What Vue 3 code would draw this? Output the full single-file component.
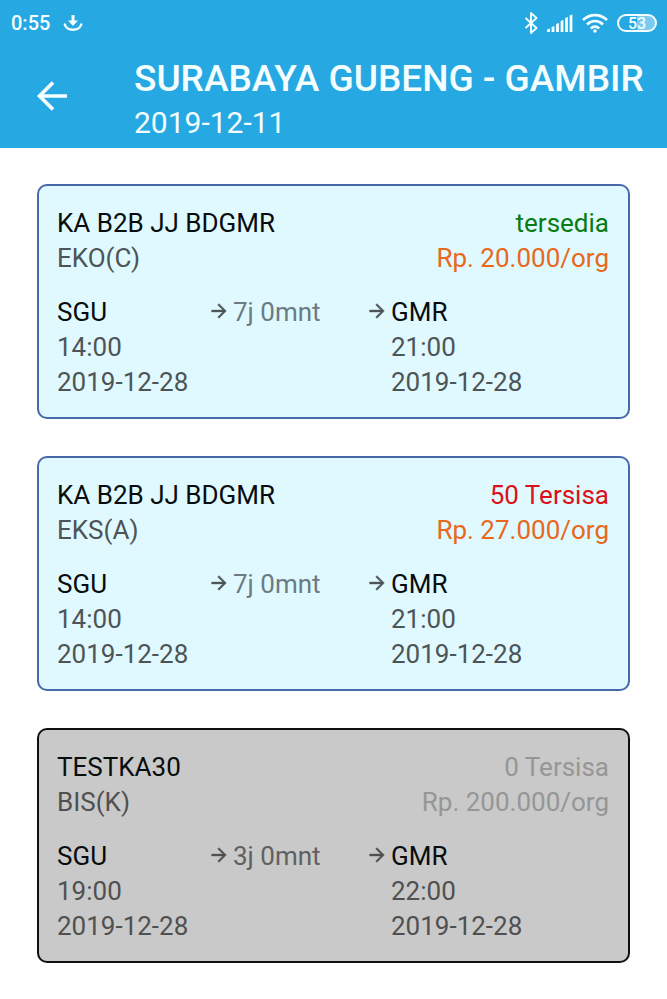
<script setup>
const trains = [
  {
    id: 1, name: 'KA B2B JJ BDGMR', seat: 'EKO(C)', stock: 'tersedia', tone: 'available', price: 'Rp. 20.000/org',
    from: 'SGU', departTime: '14:00', departDate: '2019-12-28', duration: '7j 0mnt',
    to: 'GMR', arriveTime: '21:00', arriveDate: '2019-12-28'
  },
  {
    id: 2, name: 'KA B2B JJ BDGMR', seat: 'EKS(A)', stock: '50 Tersisa', tone: 'limited', price: 'Rp. 27.000/org',
    from: 'SGU', departTime: '14:00', departDate: '2019-12-28', duration: '7j 0mnt',
    to: 'GMR', arriveTime: '21:00', arriveDate: '2019-12-28'
  },
  {
    id: 3, name: 'TESTKA30', seat: 'BIS(K)', stock: '0 Tersisa', tone: 'sold-out', price: 'Rp. 200.000/org',
    from: 'SGU', departTime: '19:00', departDate: '2019-12-28', duration: '3j 0mnt',
    to: 'GMR', arriveTime: '22:00', arriveDate: '2019-12-28'
  }
]
</script>

<template>
  <div class="screen">
    <header class="top">
      <div class="status">
        <div class="status-group">
          <span class="clock">0:55</span>
          <svg viewBox="0 0 20 18" width="20" height="18" aria-hidden="true">
            <path d="M10 1v8" stroke="currentColor" stroke-width="3" fill="none" />
            <path d="M5 6.500h10L10 12z" fill="currentColor" />
            <path d="M1.800 10.500c2 7 14.400 7 16.400 0" stroke="currentColor" stroke-width="2.400" fill="none" stroke-linecap="round" />
          </svg>
        </div>
        <div class="status-group indicators">
          <svg viewBox="0 0 14 22" width="14" height="22" aria-hidden="true">
            <path d="M1.500 6l11 10L7 21V1l5.500 5-11 10" stroke="currentColor" stroke-width="1.900" fill="none" stroke-linejoin="round" />
          </svg>
          <svg viewBox="0 0 26 19" width="26" height="19" aria-hidden="true">
            <path d="M0 18v-2.500l3-1V18zM4.600 18v-5l2.800-1V18zM9.100 18v-8l2.800-1V18zM13.600 18V7l2.800-1v12zM18.100 18V4l2.800-1v15zM22.600 18V1.500l2.800-1V18z" fill="currentColor" />
          </svg>
          <svg viewBox="0 0 26 20" width="26" height="20" aria-hidden="true">
            <path d="M1 7c7-6.500 17-6.500 24 0M5 11.500c5-4.500 11-4.500 16 0M8.800 15.500c2.600-2.300 5.800-2.300 8.400 0" stroke="currentColor" stroke-width="2.700" fill="none" />
            <circle cx="13" cy="18" r="1.800" fill="currentColor" />
          </svg>
          <span class="battery">53</span>
        </div>
      </div>
      <div class="bar">
        <button class="back" type="button" aria-label="Kembali">
          <svg viewBox="0 0 30 30" width="30" height="30" aria-hidden="true">
            <path d="M16 1.500L2.500 15L16 28.500M2 15h28" stroke="currentColor" stroke-width="3.700" fill="none" />
          </svg>
        </button>
        <div class="heading">
          <h1>SURABAYA GUBENG - GAMBIR</h1>
          <p>2019-12-11</p>
        </div>
      </div>
    </header>

    <main class="list">
      <article v-for="t in trains" :key="t.id" class="card" :class="t.tone">
        <div class="summary">
          <div>
            <h2>{{ t.name }}</h2>
            <p>{{ t.seat }}</p>
          </div>
          <div class="offer">
            <p class="stock">{{ t.stock }}</p>
            <p class="price">{{ t.price }}</p>
          </div>
        </div>
        <div class="route">
          <div>
            <h3>{{ t.from }}</h3>
            <p>{{ t.departTime }}</p>
            <p>{{ t.departDate }}</p>
          </div>
          <div class="leg">
            <svg class="arrow" viewBox="0 0 24 24" width="22" height="22" aria-hidden="true">
              <path d="M12 4l-1.410 1.410L16.170 11H4v2h12.170l-5.580 5.590L12 20l8-8z" />
            </svg>
            <p class="duration">{{ t.duration }}</p>
          </div>
          <div class="leg">
            <svg class="arrow" viewBox="0 0 24 24" width="22" height="22" aria-hidden="true">
              <path d="M12 4l-1.410 1.410L16.170 11H4v2h12.170l-5.580 5.590L12 20l8-8z" />
            </svg>
            <div>
              <h3>{{ t.to }}</h3>
              <p>{{ t.arriveTime }}</p>
              <p>{{ t.arriveDate }}</p>
            </div>
          </div>
        </div>
      </article>
    </main>
  </div>
</template>

<style>
body {
  margin: 0;
  background: #fefefe;
}
</style>

<style scoped>
.screen {
  font-family: Roboto, "Noto Sans", sans-serif;
  font-size: 26px;
  line-height: 35px;
  color: #4e5456;
}
h1, h2, h3, p {
  margin: 0;
  font-size: inherit;
  font-weight: 400;
}
.top {
  background: #26a8e2;
  color: #f4feff;
}
.status {
  display: flex;
  align-items: center;
  justify-content: space-between;
  box-sizing: border-box;
  height: 44px;
  padding: 2px 10px 0 11px;
}
.status-group {
  display: flex;
  align-items: center;
  gap: 13px;
}
.indicators {
  gap: 9px;
}
.clock {
  font-size: 20px;
  font-weight: 500;
}
.battery {
  box-sizing: border-box;
  width: 40px;
  height: 18px;
  border: 2px solid currentColor;
  border-radius: 9px;
  background: linear-gradient(to right, transparent 50%, #7bcbf0 50%);
  font-size: 16px;
  font-weight: 500;
  line-height: 15px;
  text-align: center;
}
.bar {
  display: flex;
  align-items: center;
  padding-left: 37px;
}
.back {
  display: flex;
  flex: none;
  width: 97px;
  padding: 0;
  border: 0;
  background: none;
  color: inherit;
}
.heading {
  padding: 11px 0 5px;
  white-space: nowrap;
}
.heading h1 {
  font-size: 37px;
  font-weight: 500;
  line-height: 48px;
}
.heading p {
  font-size: 30px;
  line-height: 40px;
}
.list {
  display: flex;
  flex-direction: column;
  gap: 37px;
  padding: 36px 37px;
}
.card {
  display: flex;
  flex-direction: column;
  gap: 19px;
  padding: 20px 19px 17px 18px;
  border: 2px solid #4868a8;
  border-radius: 10px;
  background: #dff9ff;
}
.summary {
  display: flex;
  justify-content: space-between;
}
.offer {
  text-align: right;
}
h2, h3 {
  color: #080c0d;
}
.route {
  display: grid;
  grid-template-columns: 151fr 158fr 243fr;
}
.leg {
  display: flex;
  align-items: flex-start;
  gap: 3px;
}
.arrow {
  flex: none;
  margin-top: 5px;
}
.arrow path {
  fill: currentColor;
  stroke: currentColor;
  stroke-width: 0.5px;
}
.duration {
  color: #6b7b80;
}
.price {
  color: #e8681c;
}
.available .stock {
  color: #087c12;
}
.limited .stock {
  color: #dc1018;
}
.sold-out {
  border-color: #101010;
  background: #c9c9c9;
  color: #505050;
}
.sold-out .duration {
  color: #606060;
}
.sold-out .stock,
.sold-out .price {
  color: #969696;
}
</style>
